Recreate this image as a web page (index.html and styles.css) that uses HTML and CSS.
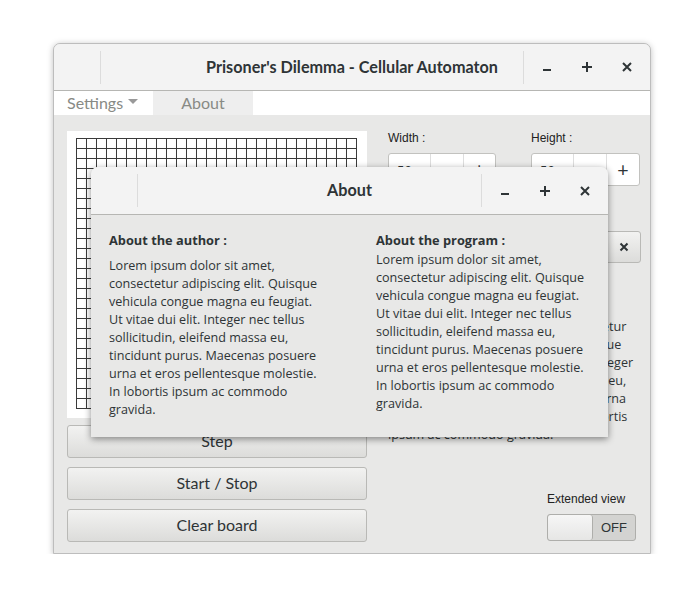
FILE: index.html
```html
<!DOCTYPE html>
<html>
<head>
<meta charset="utf-8">
<link rel="stylesheet" href="styles.css">
</head>
<body>
<div class="window">
  <div class="titlebar">
    <div class="tb-start"><span class="sep"></span></div>
    <div class="tb-title">Prisoner's Dilemma - Cellular Automaton</div>
    <div class="tb-end">
      <span class="sep"></span>
      <span class="tbtn"><svg width="12" height="12" viewBox="0 0 12 12"><rect x="2" y="8" width="8" height="2" fill="#2e3436"/></svg></span>
      <span class="tbtn"><svg width="12" height="12" viewBox="0 0 12 12"><rect x="1" y="5" width="10" height="2" fill="#2e3436"/><rect x="5" y="1" width="2" height="10" fill="#2e3436"/></svg></span>
      <span class="tbtn"><svg width="12" height="12" viewBox="0 0 12 12"><path d="M2 2 L10 10 M10 2 L2 10" stroke="#2e3436" stroke-width="2"/></svg></span>
    </div>
  </div>
  <div class="menubar">
    <div class="menu-item">Settings <svg width="10" height="6" viewBox="0 0 10 6"><path d="M0 0 L10 0 L5 5 Z" fill="#999"/></svg></div>
    <div class="menu-item active">About</div>
  </div>
  <div class="content">
    <div class="left-col">
      <div class="board"><div class="grid"></div></div>
      <button class="btn">Step</button>
      <button class="btn">Start / Stop</button>
      <button class="btn">Clear board</button>
    </div>
    <div class="right-col">
      <div class="dims">
        <div class="dim">
          <div class="lbl">Width :</div>
          <div class="spin"><span class="val">50</span><span class="sb">−</span><span class="sb">+</span></div>
        </div>
        <div class="dim dim-h">
          <div class="lbl">Height :</div>
          <div class="spin"><span class="val">50</span><span class="sb">−</span><span class="sb">+</span></div>
        </div>
      </div>
      <div class="entry-row"><div class="entry"></div><div class="clear-btn"><svg width="10" height="10" viewBox="0 0 10 10"><path d="M1.5 1.5 L8.5 8.5 M8.5 1.5 L1.5 8.5" stroke="#2e3436" stroke-width="2"/></svg></div></div>
      <p class="para">Lorem ipsum dolor sit amet, consectetur adipiscing elit. Quisque vehicula congue magna eu feugiat. Ut vitae dui elit. Integer nec tellus sollicitudin, eleifend massa eu, tincidunt purus. Maecenas posuere urna et eros pellentesque molestie. In lobortis ipsum ac commodo gravida.</p>
      <div class="ext">
        <div class="lbl">Extended view</div>
        <div class="switch"><span class="knob"></span><span class="off">OFF</span></div>
      </div>
    </div>
  </div>
</div>

<div class="dialog">
  <div class="titlebar dlg-tb">
    <div class="tb-start"><span class="sep"></span></div>
    <div class="tb-title">About</div>
    <div class="tb-end">
      <span class="sep"></span>
      <span class="tbtn"><svg width="12" height="12" viewBox="0 0 12 12"><rect x="2" y="8" width="8" height="2" fill="#2e3436"/></svg></span>
      <span class="tbtn"><svg width="12" height="12" viewBox="0 0 12 12"><rect x="1" y="5" width="10" height="2" fill="#2e3436"/><rect x="5" y="1" width="2" height="10" fill="#2e3436"/></svg></span>
      <span class="tbtn"><svg width="12" height="12" viewBox="0 0 12 12"><path d="M2 2 L10 10 M10 2 L2 10" stroke="#2e3436" stroke-width="2"/></svg></span>
    </div>
  </div>
  <div class="dlg-body">
    <div class="col col-author">
      <h3>About the author :</h3>
      <p>Lorem ipsum dolor sit amet, consectetur adipiscing elit. Quisque vehicula congue magna eu feugiat. Ut vitae dui elit. Integer nec tellus sollicitudin, eleifend massa eu, tincidunt purus. Maecenas posuere urna et eros pellentesque molestie. In lobortis ipsum ac commodo gravida.</p>
    </div>
    <div class="col col-program">
      <h3>About the program :</h3>
      <p>Lorem ipsum dolor sit amet, consectetur adipiscing elit. Quisque vehicula congue magna eu feugiat. Ut vitae dui elit. Integer nec tellus sollicitudin, eleifend massa eu, tincidunt purus. Maecenas posuere urna et eros pellentesque molestie. In lobortis ipsum ac commodo gravida.</p>
    </div>
  </div>
</div>
</body>
</html>
```

FILE: styles.css
```css
* { box-sizing: border-box; }
html, body { margin: 0; padding: 0; background: #ffffff; }
body { font-family: "Open Sans", sans-serif; color: #2e3436; }

.window {
  margin: 43px 0 0 53px;
  width: 598px;
  height: 511px;
  border: 1px solid #bdbdbd;
  border-radius: 7px 7px 0 0;
  background: #e8e8e7;
  box-shadow: 0 1px 6px rgba(0,0,0,0.25);
  display: flex;
  flex-direction: column;
  overflow: hidden;
}

.titlebar {
  height: 47px;
  flex: none;
  background: #f3f3f3;
  border-bottom: 1px solid #b6b6b3;
  display: grid;
  grid-template-columns: 1fr auto 1fr;
  align-items: center;
}
.tb-start { display: flex; align-items: center; padding-left: 46px; height: 100%; }
.sep { display: block; width: 1px; height: 33px; background: #dcdcdc; }
.tb-title {
  font-family: "Lato", sans-serif;
  font-weight: 700;
  font-size: 16.2px;
  color: #2e3436;
  padding-bottom: 2px;
}
.tb-end { display: flex; align-items: center; justify-content: flex-end; padding-right: 3px; height: 100%; }
.tb-end .sep { margin-right: 3px; }
.tbtn { width: 40px; height: 30px; display: flex; align-items: center; justify-content: center; }

.menubar {
  height: 24px;
  flex: none;
  background: #ffffff;
  display: flex;
  font-family: "Lato", sans-serif;
  font-size: 16px;
  color: #888a85;
}
.menu-item { display: flex; align-items: center; gap: 5px; padding: 0 13px; height: 100%; padding-bottom: 2px; }
.menu-item:first-child { width: 99px; }
.menu-item.active { background: #eeeeee; width: 100px; justify-content: center; padding: 0 0 2px 0; }

.content {
  flex: 1;
  display: flex;
  padding: 16px 9px 10px 13px;
  gap: 21px;
}
.left-col { width: 300px; display: flex; flex-direction: column; gap: 9px; }
.board { background: #ffffff; height: 287px; padding: 7px 0 0 9px; margin-bottom: -2px; }
.grid {
  width: 281px;
  height: 271px;
  background-image:
    linear-gradient(to right, #3a3a3a 1px, transparent 1px),
    linear-gradient(to bottom, #3a3a3a 1px, transparent 1px);
  background-size: 10px 10px;
}
.btn {
  height: 33px;
  width: 300px;
  border: 1px solid #b9b9b6;
  border-radius: 3px;
  background: linear-gradient(#f2f2f1, #dcdcda);
  font-family: "Lato", sans-serif;
  font-size: 16px;
  color: #2e3436;
  padding: 0 0 2px 0;
}

.right-col { flex: 1; display: flex; flex-direction: column; }
.lbl { font-family: "Liberation Sans", sans-serif; font-size: 12px; line-height: 14px; color: #222; }
.dims { display: flex; gap: 35px; }
.dim { width: 108px; display: flex; flex-direction: column; gap: 8px; }
.dim-h { width: 109px; }
.spin {
  height: 33px;
  display: flex;
  background: #ffffff;
  border: 1px solid #c2c2bf;
  border-radius: 3px;
}
.spin .val { width: 42px; border-right: 1px solid #dedede; display: flex; align-items: center; padding-left: 8px; font-size: 13px; }
.spin .sb { flex: 1; display: flex; align-items: center; justify-content: center; font-size: 20px; }
.spin .sb + .sb { border-left: 1px solid #dedede; }

.entry-row { display: flex; margin-top: 45px; height: 32px; }
.entry { flex: 1; background: #ffffff; border: 1px solid #c2c2bf; border-right: none; border-radius: 3px 0 0 3px; }
.clear-btn {
  width: 34px;
  border: 1px solid #b9b9b6;
  border-radius: 0 3px 3px 0;
  background: linear-gradient(#f2f2f1, #dcdcda);
  display: flex; align-items: center; justify-content: center;
}

.para { margin: 55px 0 0 0; width: 250px; font-size: 12.6px; line-height: 18px; color: #2e3436; }

.ext { margin-top: auto; align-self: flex-end; margin-right: 5px; margin-bottom: 2px; display: flex; flex-direction: column; gap: 8px; }
.switch {
  width: 89px; height: 27px;
  display: flex;
  border: 1px solid #aeaeab;
  border-radius: 3px;
  background: #d3d3d1;
  overflow: hidden;
}
.knob { width: 45px; background: linear-gradient(#f6f6f6, #e6e6e5); border-right: 1px solid #aeaeab; border-radius: 3px; }
.off { flex: 1; display: flex; align-items: center; justify-content: center; font-family: "Liberation Sans", sans-serif; font-size: 13px; color: #2e3436; }

.dialog {
  position: absolute;
  left: 91px;
  top: 167px;
  width: 517px;
  height: 270px;
  background: #e8e8e7;
  border-radius: 7px 7px 0 0;
  box-shadow: 0 2px 7px rgba(0,0,0,0.45);
  overflow: hidden;
}
.dlg-tb { height: 48px; }
.dlg-body { display: flex; padding: 16px 18px 0 18px; gap: 52px; }
.col { width: 215px; flex: none; }
.col h3 { margin: 0; font-size: 12.8px; font-weight: 700; line-height: 18px; }
.col p { margin: 0; font-size: 12.6px; line-height: 18px; }
.col-author p { margin-top: 8px; }
.col-program p { margin-top: 2px; }
```
